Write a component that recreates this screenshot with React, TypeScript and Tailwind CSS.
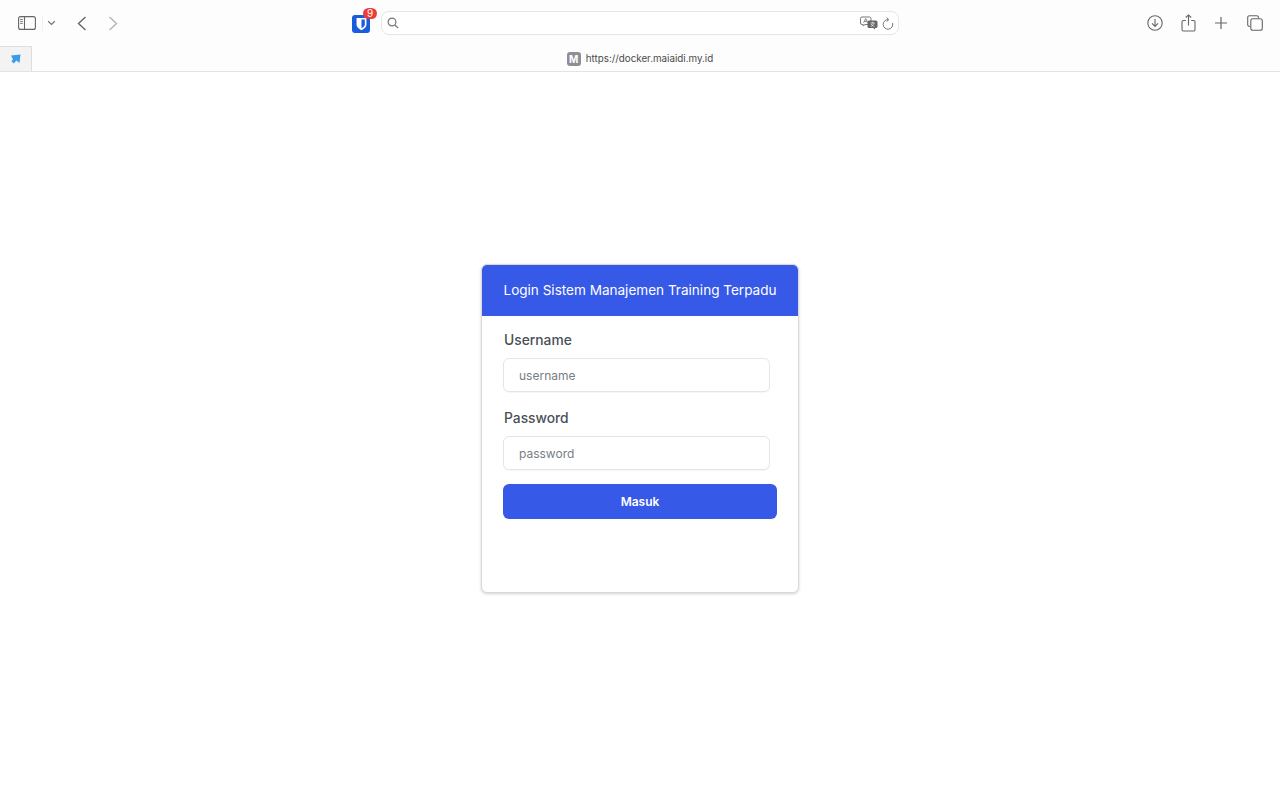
const inter = { fontFamily: 'Inter, "Liberation Sans", sans-serif' }

function Toolbar() {
  return (
    <div className="flex h-[46px] items-center pl-[18px] text-[#6e6e6e]">
      {/* sidebar toggle */}
      <svg width="18" height="14" viewBox="0 0 18 14" fill="none" stroke="#666" strokeWidth="1.1">
        <rect x="0.6" y="0.6" width="16.8" height="12.8" rx="2" />
        <path d="M6.5 0.6V13.4" />
        <path d="M2.2 3.4H4.8M2.2 5.4H4.8M2.2 7.4H4.8" strokeWidth="0.9" />
      </svg>
      <div className="ml-[6px] h-[16px] w-px bg-[#f0f0f0]" />
      <svg className="ml-[4px]" width="9" height="6" viewBox="0 0 9 6" fill="none" stroke="#777" strokeWidth="1.3">
        <path d="M1.2 1.2L4.5 4.4L7.8 1.2" />
      </svg>
      <svg className="ml-[21px]" width="10" height="15" viewBox="0 0 10 15" fill="none" stroke="#666" strokeWidth="1.4">
        <path d="M8.5 1L1.5 7.5L8.5 14" />
      </svg>
      <svg className="ml-[21px]" width="10" height="15" viewBox="0 0 10 15" fill="none" stroke="#b4b4b4" strokeWidth="1.4">
        <path d="M1.5 1L8.5 7.5L1.5 14" />
      </svg>

      {/* bitwarden extension */}
      <div className="relative ml-[234px] mt-[1px] flex h-[18px] w-[18px] items-center justify-center rounded-[3px] bg-[#175ddc]">
        <svg width="11" height="14" viewBox="0 0 10 12">
          <path d="M0.5 0.5H9.5V6.5C9.5 9 7 10.6 5 11.6C3 10.6 0.5 9 0.5 6.5Z" fill="#fff" />
          <path d="M5 2H8V6.4C8 7.9 6.4 9 5 9.8Z" fill="#175ddc" />
        </svg>
        <span className="absolute -right-[7px] -top-[7px] flex h-[11px] w-[14px] items-center justify-center rounded-full bg-[#ee3b36] text-[10px] leading-none text-white" style={inter}>
          9
        </span>
      </div>

      {/* address bar */}
      <div className="ml-[11px] flex h-[24px] w-[518px] items-center rounded-[8px] border border-[#e6e6e6] bg-white pl-[5px] pr-[4px]">
        <svg width="12" height="12" viewBox="0 0 12 12" fill="none" stroke="#777" strokeWidth="1.2">
          <circle cx="5" cy="5" r="3.9" />
          <path d="M8 8L11.2 11.2" />
        </svg>
        <div className="flex-1" />
        <svg width="18" height="14" viewBox="0 0 18 14">
          <path d="M2 1H9.5A1.5 1.5 0 0 1 11 2.5V7A1.5 1.5 0 0 1 9.5 8.5H5L3.2 10V8.5H2A1.5 1.5 0 0 1 .5 7V2.5A1.5 1.5 0 0 1 2 1Z" fill="#fff" stroke="#777" strokeWidth="1" />
          <path d="M3.6 6.8L5.7 2.6L7.8 6.8M4.4 5.4H7" fill="none" stroke="#777" strokeWidth="0.9" />
          <path d="M9 4.5H16A1.5 1.5 0 0 1 17.5 6V10.5A1.5 1.5 0 0 1 16 12H15V13.6L13 12H9A1.5 1.5 0 0 1 7.5 10.5V6A1.5 1.5 0 0 1 9 4.5Z" fill="#666" />
          <path d="M10.5 7H14.5M12.5 6V7M14 7C13.5 9 12 10 10.7 10.4M11 8C11.6 9.2 13 10 14.4 10.4" fill="none" stroke="#fff" strokeWidth="0.7" />
        </svg>
        <svg className="ml-[4px]" width="12" height="13" viewBox="0 0 12 13" fill="none" stroke="#777" strokeWidth="1">
          <path d="M6.5 2.6A4.8 4.8 0 1 0 10.6 6" />
          <path d="M4.6 .5L6.8 2.6L4.6 4.6" />
        </svg>
      </div>

      {/* right actions */}
      <svg className="ml-[248px]" width="16" height="16" viewBox="0 0 16 16" fill="none" stroke="#666" strokeWidth="1.1">
        <circle cx="8" cy="8" r="7.2" />
        <path d="M8 4V11.2M5 8.4L8 11.4L11 8.4" />
      </svg>
      <svg className="ml-[18px] -mt-[1px]" width="15" height="18" viewBox="0 0 15 18" fill="none" stroke="#666" strokeWidth="1.1">
        <path d="M4.8 6.5H2.5A1.5 1.5 0 0 0 1 8V15.5A1.5 1.5 0 0 0 2.5 17H12.5A1.5 1.5 0 0 0 14 15.5V8A1.5 1.5 0 0 0 12.5 6.5H10.2" />
        <path d="M7.5 11.5V1M4.8 3.5L7.5 .9L10.2 3.5" />
      </svg>
      <svg className="ml-[19px]" width="12" height="12" viewBox="0 0 12 12" fill="none" stroke="#666" strokeWidth="1.2">
        <path d="M6 0V12M0 6H12" />
      </svg>
      <svg className="ml-[20px]" width="16" height="16" viewBox="0 0 16 16" fill="none" stroke="#666" strokeWidth="1.1">
        <path d="M3 11.5H2.5A1.8 1.8 0 0 1 .7 9.7V2.5A1.8 1.8 0 0 1 2.5 .7H9.7A1.8 1.8 0 0 1 11.5 2.5V3" />
        <rect x="3.8" y="3.8" width="11.5" height="11.5" rx="2" />
      </svg>
    </div>
  )
}

function TabBar() {
  return (
    <div className="relative flex h-[26px] items-center justify-center border-b border-[#e3e3e3]">
      <div className="absolute bottom-0 left-0 flex h-[25px] w-[32px] items-center justify-center border-r border-t border-[#dedede] bg-[#f3f3f3]">
        <svg width="11" height="10" viewBox="0 0 11 10">
          <path d="M1 1.5L10.5 0.5L9.5 9L6.5 6.5L3.5 9.5L1.5 7L3 5.5Z" fill="#3a9be8" />
        </svg>
      </div>
      <div className="mt-[1px] flex items-center" style={inter}>
        <span className="flex h-[14px] w-[14px] items-center justify-center rounded-[3px] bg-[#8e8e96] text-[10px] font-bold leading-none text-white">
          M
        </span>
        <span className="ml-[5px] text-[9.8px] leading-none text-[#4a4a4a]">https://docker.maiaidi.my.id</span>
      </div>
    </div>
  )
}

function Field({ label, placeholder }: { label: string; placeholder: string }) {
  return (
    <div className="mb-[16px]">
      <label className="mb-[7px] block pl-[1px] text-[13.8px] font-medium leading-[21px] text-[#4a5058]">{label}</label>
      <div className="flex h-[34px] w-[267px] items-center rounded-[6px] border border-[#e3e5e8] bg-white pl-[15px] pt-[1px] text-[12px] text-[#787d84] shadow-[0_1px_1px_rgba(0,0,0,0.04)]">
        {placeholder}
      </div>
    </div>
  )
}

function LoginCard() {
  return (
    <div className="h-[329px] w-[318px] overflow-hidden rounded-[6px] border border-[#d9d9d9] bg-white shadow-[0_1px_3px_rgba(0,0,0,0.18)]">
      <div className="flex h-[51px] items-center justify-center bg-[#3659e8] text-[13.55px] text-white">
        Login Sistem Manajemen Training Terpadu
      </div>
      <div className="px-[21px] pt-[14px]">
        <Field label="Username" placeholder="username" />
        <Field label="Password" placeholder="password" />
        <button type="button" className="-mt-[2px] block h-[35px] w-[274px] rounded-[6px] bg-[#3659e8] text-[12px] font-semibold text-white">
          Masuk
        </button>
      </div>
    </div>
  )
}

export default function App() {
  return (
    <div className="flex min-h-[800px] flex-col bg-white" style={inter}>
      <div className="bg-[#fdfdfd]">
        <Toolbar />
        <TabBar />
      </div>
      <main className="flex flex-1 justify-center pt-[192px]">
        <LoginCard />
      </main>
    </div>
  )
}
